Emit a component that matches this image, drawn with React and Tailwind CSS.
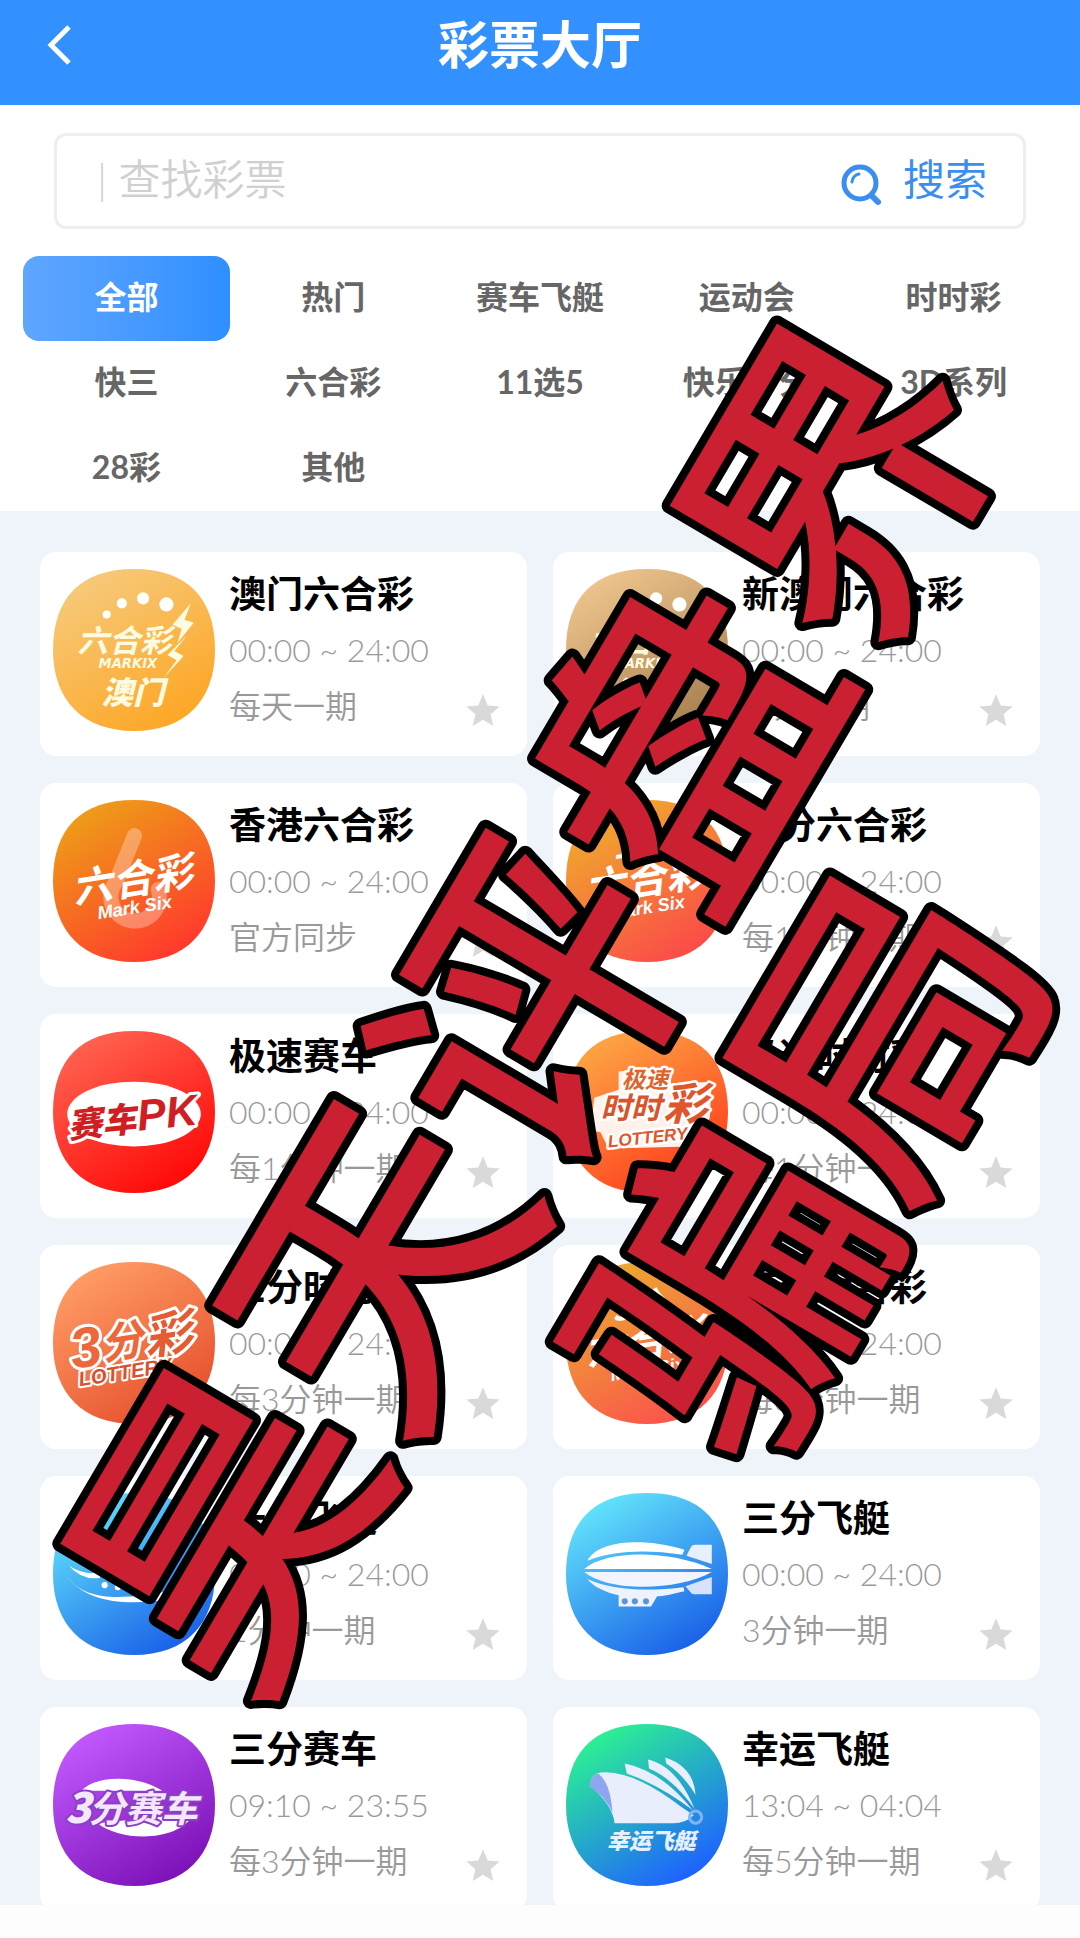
import React from "react";
import { MdStar } from "react-icons/md";

const LOTTERIES = [
  { id: 1, name: "澳门六合彩", time: "00:00 ~ 24:00", period: "每天一期", icon: "macau" },
  { id: 2, name: "新澳门六合彩", time: "00:00 ~ 24:00", period: "每天一期", icon: "newMacau" },
  { id: 3, name: "香港六合彩", time: "00:00 ~ 24:00", period: "官方同步", icon: "hongkong" },
  { id: 4, name: "一分六合彩", time: "00:00 ~ 24:00", period: "每1分钟一期", icon: "markOne" },
  { id: 5, name: "极速赛车", time: "00:00 ~ 24:00", period: "每1分钟一期", icon: "racePk" },
  { id: 6, name: "极速时时彩", time: "00:00 ~ 24:00", period: "每1分钟一期", icon: "fastLottery" },
  { id: 7, name: "三分时时彩", time: "00:00 ~ 24:00", period: "每3分钟一期", icon: "threeLottery" },
  { id: 8, name: "三分六合彩", time: "00:00 ~ 24:00", period: "每3分钟一期", icon: "markThree" },
  { id: 9, name: "一分飞艇", time: "00:00 ~ 24:00", period: "1分钟一期", icon: "ship" },
  { id: 10, name: "三分飞艇", time: "00:00 ~ 24:00", period: "3分钟一期", icon: "airship" },
  { id: 11, name: "三分赛车", time: "09:10 ~ 23:55", period: "每3分钟一期", icon: "threeRace" },
  { id: 12, name: "幸运飞艇", time: "13:04 ~ 04:04", period: "每5分钟一期", icon: "luckyShip" },
];

const CATEGORIES = ["全部", "热门", "赛车飞艇", "运动会", "时时彩", "快三", "六合彩", "11选5", "快乐十分", "3D系列", "28彩", "其他"];

const GRADIENTS = {
  macau: ["#f7c97a", "#fda726"],
  newMacau: ["#edc48c", "#a98253"],
  hongkong: ["#ee9d18", "#ff3a2c"],
  markOne: ["#f0ac2c", "#fb4b48"],
  racePk: ["#ff6250", "#ff0a08"],
  fastLottery: ["#fda544", "#ff3c1c"],
  threeLottery: ["#ff9c66", "#e6502c"],
  markThree: ["#ecab30", "#fb524c"],
  ship: ["#62e4fb", "#1a62e8"],
  airship: ["#62e4fb", "#1a62e8"],
  threeRace: ["#c159ff", "#7c12b8"],
  luckyShip: ["#2cf292", "#1e62ff"],
};

const CJK = "'Noto Sans CJK SC', sans-serif";

// logo lettering, slanted by default
const Word = ({ x, y, size, children, ...rest }) => (
  <text x={x} y={y} fontSize={size} fontFamily={CJK} fontWeight="700" fontStyle="italic" fill="#fff" {...rest}>
    {children}
  </text>
);

const Latin = (props) => <Word fontFamily="'Liberation Sans', sans-serif" {...props} />;

const Macau = () => (
  <g>
    <circle cx="53" cy="45" r="4" fill="#fff" />
    <circle cx="68" cy="34" r="5" fill="#fff" />
    <circle cx="89" cy="29" r="6" fill="#fff" />
    <circle cx="112" cy="35" r="7" fill="#fff" />
    <Word x="24" y="82" size="31" fill="#fffbe0">六合彩</Word>
    <path d="M136 34 L118 55 L127 59 L123 73 L139 53 L130 50 Z M133 65 L113 85 L122 90 L109 108 L129 86 L120 81 Z" fill="#fffbe0" />
    <Latin x="45" y="98" size="13" fill="#fffbe0" fontFamily="'DejaVu Sans', sans-serif">MARKIX</Latin>
    <Word x="48" y="133" size="31" fill="#fffbe0" fontWeight="900">澳门</Word>
  </g>
);

const MarkSix = ({ top }) => (
  <g transform="rotate(-9 80 90)">
    {top ? (
      <Word x="52" y="54" size="32">{top}</Word>
    ) : (
      <path d="M89 36 L64 78 A24 24 0 1 0 104 92" stroke="#fff" strokeOpacity=".3" strokeWidth="15" strokeLinecap="round" fill="none" />
    )}
    <Word x="20" y="93" size="40">六合彩</Word>
    <Latin x="41" y="112" size="18">Mark Six</Latin>
  </g>
);

const LOGOS = {
  macau: <Macau />,
  newMacau: <Macau />,
  hongkong: <MarkSix />,
  markOne: <MarkSix top="1分" />,
  markThree: <MarkSix top="3分" />,
  racePk: (
    <g>
      <ellipse cx="80" cy="82" rx="66" ry="32" fill="#fff" />
      <g transform="rotate(-6 80 85)" stroke="#fff" strokeWidth="6" paintOrder="stroke" strokeLinejoin="round">
        <Word x="14" y="99" size="34" fill="#cf1f24" fontWeight="900">赛车</Word>
        <Latin x="83" y="99" size="43" fill="#cf1f24">PK</Latin>
      </g>
    </g>
  ),
  fastLottery: (
    <g>
      <path d="M28 66 L52 58 L52 40 L102 36 L104 52 L144 50 L142 86 L124 114 L42 116 L34 100 L24 98 Z" fill="#fff" fillOpacity=".9" />
      <g stroke="#fff" strokeWidth="5" paintOrder="stroke" strokeLinejoin="round">
        <Word x="55" y="56" size="23" fill="#e0632c">极速</Word>
        <Word x="34" y="87" size="30" fill="#d9542c">时时</Word>
        <Word x="96" y="88" size="44" fill="#e0552c">彩</Word>
        <Latin x="42" y="115" size="17" fill="#e0552c" transform="rotate(-6 42 115)">LOTTERY</Latin>
      </g>
    </g>
  ),
  threeLottery: (
    <g transform="rotate(-9 80 90)" stroke="#fff" strokeWidth="6" paintOrder="stroke" strokeLinejoin="round">
      <Latin x="18" y="96" size="56" fill="#ec673a">3</Latin>
      <Word x="49" y="92" size="42" fill="#ec673a">分</Word>
      <Word x="92" y="94" size="48" fill="#e45c34">彩</Word>
      <Latin x="22" y="114" size="20" fill="#d9502c" strokeWidth="4">LOTTERY</Latin>
    </g>
  ),
  ship: (
    <g fill="#fff">
      <path d="M12 80 C30 106 60 104 90 101 L132 94 L120 104 C80 111 34 112 12 80 Z" />
      <path d="M16 72 Q36 84 50 76 L46 84 Q28 86 16 72 Z" />
      <circle cx="51" cy="91" r="3" />
      <circle cx="64" cy="93" r="3" />
    </g>
  ),
  airship: (
    <g>
      <path d="M21 67 C32 46 78 44 117 56 L115 61 C82 56 48 56 21 67 Z" fill="#fff" />
      <path d="M119 62 L123 54 Q124 51 128 51 L144 51 L144 70 Z" fill="#e8f0ff" />
      <path d="M18 75 C40 56 102 56 144 75 Z" fill="#fff" />
      <path d="M18 78 L144 78 C110 97 42 98 18 78 Z" fill="#f2f4ff" />
      <path d="M21 85 C48 97 84 97 116 93 L117 97 C104 100 96 102 90 102 L84 112 L52 112 L52 101 C38 98 26 92 21 85 Z" fill="#eef2ff" />
      <path d="M118 92 L144 83 L144 100 L128 100 Q124 100 123 98 Z" fill="#d8e2fb" />
      <circle cx="58" cy="107" r="3" fill="#5d93d8" />
      <circle cx="68" cy="107" r="3" fill="#5d93d8" />
      <circle cx="79" cy="107" r="3" fill="#5d93d8" />
    </g>
  ),
  threeRace: (
    <g>
      <path d="M28 66 C42 50 84 50 108 66 Z M44 98 C66 116 124 118 140 88 Z" fill="#fff" />
      <g stroke="#8b3fc4" strokeWidth="4" paintOrder="stroke" strokeLinejoin="round">
        <Word x="12" y="98" size="42" fill="#f4e6ff" fontWeight="900">3</Word>
        <Word x="35" y="97" size="36" fill="#f4e6ff">分赛车</Word>
      </g>
    </g>
  ),
  luckyShip: (
    <g>
      <path d="M24 61 Q24 50 34 48 Q66 45 114 82 L126 90 Q118 98 106 98 L48 98 Q46 80 24 61 Z" fill="#e9eefc" />
      <path d="M23 62 Q25 50 32 49 Q44 58 46 88 Q38 70 23 62 Z" fill="#8ea6f0" />
      <path d="M58 39 Q94 46 125 85 Q92 60 60 49 Z M81 35 Q110 42 127 84 Q106 54 82 44 Z M98 33 Q126 42 128 70 Q116 50 99 39 Z" fill="#e9eefc" />
      <circle cx="128" cy="92" r="6" fill="none" stroke="#7fb4f6" strokeWidth="3" />
      <Word x="40" y="123" size="22" fill="#e6f0ff" fontWeight="900">幸运飞艇</Word>
    </g>
  ),
};

const LotteryIcon = ({ type }) => {
  const [from, to] = GRADIENTS[type];
  return (
    <svg viewBox="0 0 160 160" className="w-[162px] h-[162px] shrink-0" aria-hidden="true">
      <defs>
        <linearGradient id={`bg-${type}`} x1="0.2" y1="0.05" x2="0.75" y2="0.95">
          <stop offset="0" stopColor={from} />
          <stop offset="1" stopColor={to} />
        </linearGradient>
      </defs>
      <path d="M80 0 C132 0 160 28 160 80 C160 130 130 160 80 160 C30 160 0 130 0 80 C0 28 28 0 80 0 Z" fill={`url(#bg-${type})`} />
      {LOGOS[type]}
    </svg>
  );
};

const LotteryCard = ({ lottery }) => (
  <article className="flex h-[204px] rounded-2xl bg-white pl-[13px] pr-6">
    <div className="pt-[17px]">
      <LotteryIcon type={lottery.icon} />
    </div>
    <div className="flex-1 min-w-0 pl-[14px] pt-[14px] whitespace-nowrap leading-[56px] text-[32px] font-[350] text-[#999]">
      <h2 className="text-[37px] leading-[56px] font-bold text-black">{lottery.name}</h2>
      <p>{lottery.time}</p>
      <p>{lottery.period}</p>
    </div>
    <button type="button" aria-label={`收藏${lottery.name}`} className="self-end mb-[25px] -ml-10 text-[#d9d9d9]">
      <MdStar className="w-10 h-10" />
    </button>
  </article>
);

const Watermark = () => (
  <svg viewBox="0 0 1080 1938" className="absolute left-0 top-0 w-full pointer-events-none">
    <g
      fontFamily={CJK}
      fontSize="302"
      fontWeight="500"
      fill="#cb2031"
      stroke="#000"
      strokeWidth="16"
      strokeLinejoin="round"
      paintOrder="stroke"
      textAnchor="middle"
    >
      <text transform="translate(531 1003) rotate(-59.5)" y="112">昊天评盘界</text>
      <text transform="translate(810 1161) rotate(-59.5)" y="112">骗局</text>
    </g>
  </svg>
);

const App = () => {
  return (
    <div className="relative h-screen flex flex-col overflow-hidden bg-white font-['Lato','Noto_Sans_CJK_SC',sans-serif]">
      {/* Top bar */}
      <header className="grid grid-cols-[1fr_auto_1fr] shrink-0 h-[105px] bg-[#3391ff] pb-4 text-white">
        <button type="button" aria-label="返回" className="justify-self-start pl-11">
          <svg viewBox="0 0 30 44" className="w-[30px] h-[44px]" fill="none" stroke="currentColor" strokeWidth="5">
            <path d="M25 4 L7 22 L25 40" />
          </svg>
        </button>
        <h1 className="self-center text-[51px] leading-[60px] font-bold">彩票大厅</h1>
      </header>

      {/* Search */}
      <form role="search" onSubmit={(e) => e.preventDefault()} className="flex items-center shrink-0 h-24 mx-[54px] mt-7 rounded-xl border-[3px] border-[#eeeeee] pl-10 pr-9 pb-1 text-[42px]">
        <input
          type="text"
          aria-label="查找彩票"
          placeholder="| 查找彩票"
          className="flex-1 min-w-0 font-[350] outline-none placeholder:text-[#d0d0d0]"
        />
        <button type="submit" className="flex items-center gap-[18px] text-[#3a8eef]">
          <svg viewBox="0 0 44 44" className="w-[44px] h-[44px] mt-3" fill="none" stroke="currentColor" strokeLinecap="round">
            <circle cx="19" cy="20" r="16" strokeWidth="5" />
            <path d="M11 19 Q12 12 18 11" strokeWidth="3" />
            <path d="M32 34 L37 39" strokeWidth="6" />
          </svg>
          搜索
        </button>
      </form>

      {/* Categories */}
      <nav className="grid grid-cols-5 shrink-0 mt-[27px] px-[23px] text-[32px] font-bold text-[#666]">
        {CATEGORIES.map((category, index) => (
          <button
            key={category}
            type="button"
            className={index === 0 ? "h-[85px] pb-1 rounded-2xl bg-linear-to-r from-[#5fa6ff] to-[#2f8fff] text-white" : "h-[85px] pb-1"}
          >
            {category}
          </button>
        ))}
      </nav>

      {/* Lottery list */}
      <main className="flex-1 min-h-0 overflow-y-auto [scrollbar-width:none] bg-[#eff4fb] px-10 pt-[41px]">
        <div className="grid grid-cols-2 gap-x-[26px] gap-y-[27px]">
          {LOTTERIES.map((lottery) => (
            <LotteryCard key={lottery.id} lottery={lottery} />
          ))}
        </div>
      </main>

      <footer className="shrink-0 h-[33px] bg-[#fdfdfd]" />

      <Watermark />
    </div>
  );
};

export default App;
